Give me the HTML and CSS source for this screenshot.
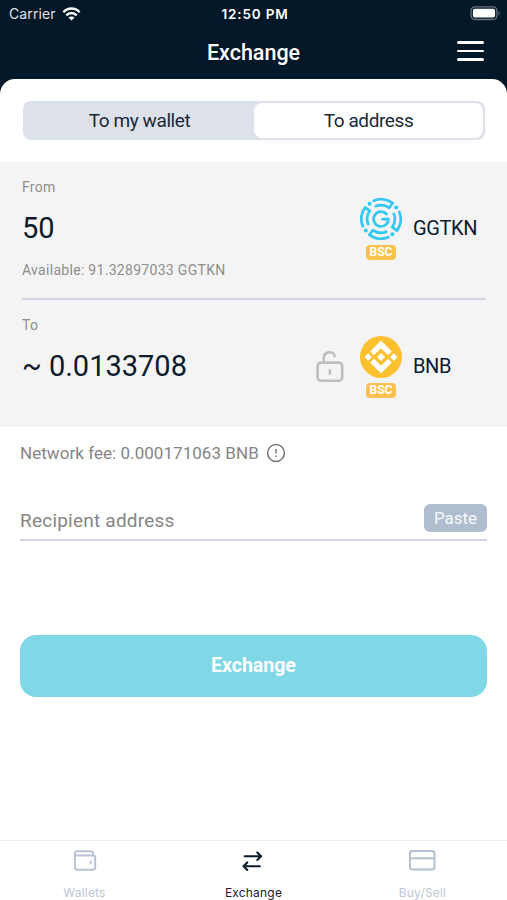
FILE: index.html
```html
<!DOCTYPE html>
<html lang="en">
<head>
    <meta charset="UTF-8">
    <meta name="viewport" content="width=device-width, initial-scale=1.0">
    <title>Exchange</title>
    <link rel="stylesheet" href="styles.css">
</head>
<body>
    <!-- Status bar and title -->
    <header>
        <div class="status-bar">
            <div class="carrier">
                <span>Carrier</span>
                <svg width="19" height="14" viewBox="0 0 18 14" fill="none" stroke="#fff" stroke-width="2.4">
                    <path d="M0.9 5.2C5.5 0.3 12.5 0.3 17.1 5.2"/>
                    <path d="M3.8 8.4C6.9 5.2 11.1 5.2 14.2 8.4"/>
                    <path d="M9 13.6L6 10.6C7.7 9 10.3 9 12 10.6Z" fill="#fff" stroke="none"/>
                </svg>
            </div>
            <span class="time">12:50 PM</span>
            <svg class="battery" width="31" height="15" viewBox="0 0 31 15">
                <rect x="1" y="0.9" width="26" height="12.6" rx="4" fill="none" stroke="#6b7480" stroke-width="1.3"/>
                <rect x="2.9" y="2.8" width="22.2" height="8.8" rx="2" fill="#fff"/>
                <path d="M28.6 5Q31 7.2 28.6 9.4Z" fill="#6b7480"/>
            </svg>
        </div>
        <div class="title-bar">
            <h1>Exchange</h1>
            <button type="button" class="menu-button" aria-label="Menu">
                <span></span>
                <span></span>
                <span></span>
            </button>
        </div>
    </header>

    <main>
        <div class="tabs">
            <button type="button" class="tab">To my wallet</button>
            <button type="button" class="tab active">To address</button>
        </div>

        <!-- From / To amounts -->
        <section class="amounts">
            <div class="row from">
                <div class="amount">
                    <p class="label">From</p>
                    <p class="value">50</p>
                    <p class="label available">Available: 91.32897033 GGTKN</p>
                </div>
                <div class="coin">
                    <div class="logo">
                        <svg width="42" height="42" viewBox="0 0 42 42" fill="none" stroke="#32c8f4" stroke-width="2.7" stroke-linejoin="round" stroke-linecap="round">
                            <path d="M26.4 16A7.4 7.4 0 1 0 28.4 21.2H22.5"/>
                            <path d="M13.7 2.8A19.6 19.6 0 0 1 32.6 5.2L29.2 9.8A13.8 13.8 0 0 0 15.8 8.2"/>
                            <path transform="rotate(90 21 21)" d="M13.7 2.8A19.6 19.6 0 0 1 32.6 5.2L29.2 9.8A13.8 13.8 0 0 0 15.8 8.2"/>
                            <path transform="rotate(180 21 21)" d="M13.7 2.8A19.6 19.6 0 0 1 32.6 5.2L29.2 9.8A13.8 13.8 0 0 0 15.8 8.2"/>
                            <path transform="rotate(270 21 21)" d="M13.7 2.8A19.6 19.6 0 0 1 32.6 5.2L29.2 9.8A13.8 13.8 0 0 0 15.8 8.2"/>
                            <g fill="#32c8f4" stroke="none">
                                <circle cx="9.6" cy="5.8" r="2"/>
                                <circle cx="36.2" cy="9.6" r="2"/>
                                <circle cx="5.8" cy="32.4" r="2"/>
                                <circle cx="32.4" cy="36.2" r="2"/>
                            </g>
                        </svg>
                        <span class="badge">BSC</span>
                    </div>
                    <span class="coin-name">GGTKN</span>
                </div>
            </div>
            <div class="row to">
                <div class="amount">
                    <p class="label">To</p>
                    <p class="value">~ 0.0133708</p>
                </div>
                <svg class="lock" width="28" height="32" viewBox="0 0 28 32" fill="none" stroke="#bebebe" stroke-width="2.6" stroke-linecap="round">
                    <rect x="1.6" y="11.6" width="24.6" height="18.2" rx="3.6"/>
                    <path d="M7.7 11.2V7.4C7.7 -0.1 17.8 -0.3 18.7 5"/>
                    <path d="M13.9 19.2V22.8"/>
                </svg>
                <div class="coin">
                    <div class="logo">
                        <svg width="42" height="42" viewBox="0 0 42 42">
                            <circle cx="21" cy="21" r="21" fill="#fdc12f"/>
                            <g fill="#fff">
                                <path d="M21 4.6L31.8 15.4L28 19.2L21 12.2L14 19.2L10.2 15.4Z"/>
                                <path d="M21 37.4L31.8 26.6L28 22.8L21 29.8L14 22.8L10.2 26.6Z"/>
                                <path d="M21 17L25 21L21 25L17 21Z"/>
                                <path d="M8.2 17.3L11.9 21L8.2 24.7L4.5 21Z"/>
                                <path d="M33.8 17.3L37.5 21L33.8 24.7L30.1 21Z"/>
                            </g>
                        </svg>
                        <span class="badge">BSC</span>
                    </div>
                    <span class="coin-name">BNB</span>
                </div>
            </div>
        </section>

        <section class="details">
            <div class="fee">
                <span>Network fee: 0.000171063 BNB</span>
                <svg width="20" height="20" viewBox="0 0 20 20" fill="none" stroke="#757575" stroke-width="1.5">
                    <circle cx="10" cy="10" r="8.4"/>
                    <path d="M10 6V10.6M10 12.4V14"/>
                </svg>
            </div>
            <div class="recipient">
                <span class="placeholder">Recipient address</span>
                <button type="button" class="paste">Paste</button>
            </div>
            <button type="button" class="exchange-button">Exchange</button>
        </section>
    </main>

    <!-- Bottom navigation -->
    <nav>
        <a class="nav-item">
            <svg width="28" height="24" viewBox="0 0 28 24" fill="none" stroke="#b8c2d4" stroke-width="2" stroke-linejoin="round" stroke-linecap="round">
                <path d="M3.9 5V18.6Q3.9 20.7 6 20.7H22.1Q24.2 20.7 24.2 18.6V8.6Q24.2 6.5 22.1 6.5H6Q3.9 6.5 3.9 4.5Q3.9 2.2 6 2.2H20Q22 2.2 22 4.2V6.5"/>
                <path d="M19.6 12.4V14.6"/>
            </svg>
            <span>Wallets</span>
        </a>
        <a class="nav-item active">
            <svg width="28" height="24" viewBox="0 0 28 24" fill="none" stroke="#0b1b2b" stroke-width="2.1" stroke-linejoin="round" stroke-linecap="round">
                <path d="M4.7 7.3H20.8M17.3 3.5L21 7.3L17.3 11"/>
                <path d="M19.8 17.2H3.8M7.3 13.4L3.5 17.2L7.3 21"/>
            </svg>
            <span>Exchange</span>
        </a>
        <a class="nav-item">
            <svg width="28" height="24" viewBox="0 0 28 24" fill="none" stroke="#b3bfd2" stroke-width="2">
                <rect x="0.9" y="2.1" width="24.6" height="18.5" rx="2.5"/>
                <path d="M0.9 9.3H25.5"/>
            </svg>
            <span>Buy/Sell</span>
        </a>
    </nav>
</body>
</html>
```
FILE: styles.css
```css
/* Global Styles */
* {
    box-sizing: border-box;
}

body {
    font-family: Roboto, sans-serif;
    background-color: #021728;
    color: #0b1b2e;
    margin: 0;
    height: 900px;
    display: flex;
    flex-direction: column;
    overflow: hidden;
}

h1, p {
    margin: 0;
    font-weight: 400;
}

button {
    font-family: inherit;
    border: none;
    padding: 0;
    cursor: pointer;
}

svg {
    display: block;
    flex: none;
}

/* Header */
header {
    height: 79px;
    color: #fff;
}

.status-bar {
    height: 27px;
    display: grid;
    grid-template-columns: 1fr auto 1fr;
    align-items: center;
    padding: 0 6px 0 9px;
    font-family: Inter, sans-serif;
}

.carrier {
    display: flex;
    align-items: center;
    gap: 6px;
    font-size: 14px;
    letter-spacing: 0.1px;
    color: #dfe3e7;
}

.time {
    font-size: 13.5px;
    font-weight: 600;
    letter-spacing: 0.8px;
}

.battery {
    justify-self: end;
}

.title-bar {
    display: grid;
    grid-template-columns: 1fr auto 1fr;
    align-items: center;
    height: 50px;
    padding: 0 23px;
}

h1 {
    grid-column: 2;
    font-size: 21.5px;
    font-weight: 500;
}

.menu-button {
    justify-self: end;
    display: flex;
    flex-direction: column;
    gap: 6px;
    width: 27px;
    margin-bottom: 2px;
    background: none;
}

.menu-button span {
    height: 2.5px;
    border-radius: 2px;
    background-color: #fff;
}

/* Page content */
main {
    flex: 1;
    background-color: #fff;
    border-radius: 15px 15px 0 0;
    padding-top: 22px;
}

.tabs {
    display: flex;
    height: 39px;
    margin: 0 22px 22px 23px;
    padding: 2px;
    border-radius: 8px;
    background-color: #dce1ea;
}

.tab {
    flex: 1;
    font-size: 19px;
    letter-spacing: -0.4px;
    color: #1b2838;
    background: none;
    border-radius: 8px;
}

.tab.active {
    background-color: #fff;
}

.amounts {
    height: 265px;
    padding: 0 21px 0 22px;
    background-color: #f4f4f4;
}

.row {
    display: flex;
    height: 138px;
}

.from {
    border-bottom: 2px solid #d0d5e2;
}

.amount {
    flex: 1;
    padding-top: 16px;
}

.label {
    font-size: 14px;
    line-height: 18px;
    letter-spacing: 0.3px;
    color: #8e8e8e;
}

.value {
    margin-top: 14px;
    font-size: 29px;
    line-height: 36px;
}

.available {
    margin-top: 15px;
}

.lock {
    margin: 51px 16px 0 0;
}

.coin {
    display: flex;
    width: 126px;
    padding-top: 36px;
    gap: 11px;
}

.logo {
    display: flex;
    flex-direction: column;
    align-items: center;
    gap: 5px;
    width: 42px;
}

.badge {
    width: 30px;
    height: 15px;
    border-radius: 4px;
    background-color: #fbc24f;
    color: #fff;
    font-size: 12px;
    font-weight: 700;
    line-height: 15px;
    text-align: center;
}

.coin-name {
    margin-top: 18px;
    font-size: 20px;
    line-height: 24px;
    letter-spacing: -0.4px;
}

/* Fee, recipient and submit */
.details {
    padding: 15px 20px 0 20px;
}

.fee {
    display: flex;
    align-items: center;
    gap: 7px;
    height: 22px;
    font-size: 17px;
    letter-spacing: 0.05px;
    color: #858585;
}

.recipient {
    display: flex;
    justify-content: space-between;
    height: 77px;
    padding-top: 40px;
    border-bottom: 2px solid #d0d5e2;
}

.placeholder {
    margin-top: 5px;
    font-size: 19px;
    line-height: 24px;
    letter-spacing: 0.22px;
    color: #858585;
}

.paste {
    width: 63px;
    height: 28px;
    border-radius: 6px;
    background-color: #b0bdce;
    color: #f7f9fc;
    font-size: 17px;
}

.exchange-button {
    display: block;
    width: 100%;
    height: 62px;
    margin-top: 94px;
    padding-bottom: 2px;
    border-radius: 16px;
    background-color: #80d8e7;
    color: #fff;
    font-size: 19.5px;
    font-weight: 700;
}

/* Bottom navigation */
nav {
    display: flex;
    height: 60px;
    border-top: 1px solid #eceef0;
    background-color: #fff;
}

.nav-item {
    flex: 1;
    display: flex;
    flex-direction: column;
    align-items: center;
    gap: 12px;
    padding-top: 8px;
    font-family: Inter, sans-serif;
    font-size: 12px;
    line-height: 16px;
    letter-spacing: 0.2px;
    color: #bdc6d4;
}

.nav-item.active {
    color: #15202c;
}
```
